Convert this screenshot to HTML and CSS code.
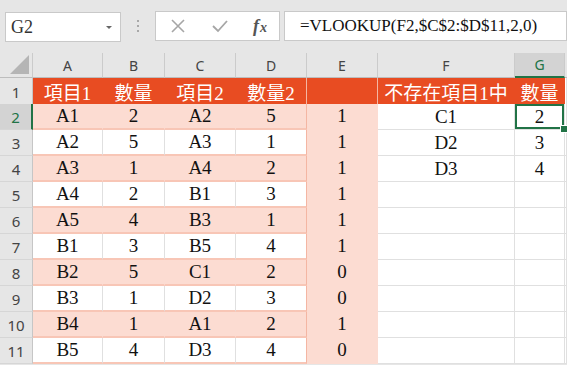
FILE: index.html
```html
<!DOCTYPE html>
<html lang="zh-Hant">
<head>
    <meta charset="UTF-8">
    <title>VLOOKUP</title>
    <link rel="stylesheet" href="styles.css">
</head>
<body>

    <!-- Name box + formula bar -->
    <div class="toolbar">
        <div class="namebox">
            <span>G2</span>
            <span class="drop"></span>
        </div>
        <div class="grip"><i></i><i></i><i></i></div>
        <div class="fbuttons">
            <svg width="16" height="16" viewBox="0 0 16 16"><path d="M2 2 L14 14 M14 2 L2 14" stroke="#a6a6a6" stroke-width="1.6" fill="none"/></svg>
            <svg width="18" height="16" viewBox="0 0 18 16"><path d="M2 8 L7 13 L16 3" stroke="#a6a6a6" stroke-width="1.8" fill="none"/></svg>
            <span class="fx">f<span>x</span></span>
        </div>
        <div class="formula">=VLOOKUP(F2,$C$2:$D$11,2,0)</div>
    </div>

    <div class="sheet">
        <div class="row colhead">
            <div class="corner"></div>
            <div>A</div><div>B</div><div>C</div><div>D</div><div>E</div><div>F</div>
            <div class="cur">G</div><div></div>
        </div>

        <div class="row hd">
            <div class="rh">1</div>
            <div>項目1</div><div>數量</div><div>項目2</div><div class="dcol">數量2</div>
            <div class="dcol"></div><div>不存在項目1中</div><div>數量</div><div class="x"></div>
        </div>
        <div class="row band">
            <div class="rh cur">2</div>
            <div>A1</div><div>2</div><div>A2</div><div class="dcol">5</div>
            <div class="e">1</div><div class="f">C1</div><div class="f sel">2</div><div class="x"></div>
        </div>
        <div class="row">
            <div class="rh">3</div>
            <div>A2</div><div>5</div><div>A3</div><div class="dcol">1</div>
            <div class="e">1</div><div class="f">D2</div><div class="f">3</div><div class="x"></div>
        </div>
        <div class="row band">
            <div class="rh">4</div>
            <div>A3</div><div>1</div><div>A4</div><div class="dcol">2</div>
            <div class="e">1</div><div class="f">D3</div><div class="f">4</div><div class="x"></div>
        </div>
        <div class="row">
            <div class="rh">5</div>
            <div>A4</div><div>2</div><div>B1</div><div class="dcol">3</div>
            <div class="e">1</div><div class="f"></div><div class="f"></div><div class="x"></div>
        </div>
        <div class="row band">
            <div class="rh">6</div>
            <div>A5</div><div>4</div><div>B3</div><div class="dcol">1</div>
            <div class="e">1</div><div class="f"></div><div class="f"></div><div class="x"></div>
        </div>
        <div class="row">
            <div class="rh">7</div>
            <div>B1</div><div>3</div><div>B5</div><div class="dcol">4</div>
            <div class="e">1</div><div class="f"></div><div class="f"></div><div class="x"></div>
        </div>
        <div class="row band">
            <div class="rh">8</div>
            <div>B2</div><div>5</div><div>C1</div><div class="dcol">2</div>
            <div class="e">0</div><div class="f"></div><div class="f"></div><div class="x"></div>
        </div>
        <div class="row">
            <div class="rh">9</div>
            <div>B3</div><div>1</div><div>D2</div><div class="dcol">3</div>
            <div class="e">0</div><div class="f"></div><div class="f"></div><div class="x"></div>
        </div>
        <div class="row band">
            <div class="rh">10</div>
            <div>B4</div><div>1</div><div>A1</div><div class="dcol">2</div>
            <div class="e">1</div><div class="f"></div><div class="f"></div><div class="x"></div>
        </div>
        <div class="row">
            <div class="rh">11</div>
            <div>B5</div><div>4</div><div>D3</div><div class="dcol">4</div>
            <div class="e">0</div><div class="f"></div><div class="f"></div><div class="x"></div>
        </div>
    </div>

</body>
</html>
```

FILE: styles.css
```css
body {
    margin: 0;
    background-color: #e6e6e6;
    font-family: 'Liberation Serif', 'Noto Sans CJK TC', serif;
    color: #111;
    overflow: hidden;
}

/* toolbar */
.toolbar {
    display: flex;
    align-items: flex-start;
    height: 53px;
    box-sizing: border-box;
    padding: 11px 0 0 5px;
}

.namebox,
.fbuttons,
.formula {
    height: 30px;
    box-sizing: border-box;
    background-color: #fff;
    border: 1px solid #c9c9c9;
    display: flex;
    align-items: center;
}

.namebox {
    width: 116px;
    padding: 0 8px 0 5px;
    justify-content: space-between;
    font-size: 18px;
    color: #333;
    margin-top: 1px;
}

.drop {
    width: 0;
    height: 0;
    border-left: 3px solid transparent;
    border-right: 3px solid transparent;
    border-top: 3px solid #666;
}

.grip {
    width: 34px;
    display: flex;
    flex-direction: column;
    align-items: center;
    gap: 3px;
    padding-top: 9px;
}

.grip i {
    width: 2px;
    height: 2px;
    background-color: #a8a8a8;
}

.fbuttons {
    width: 125px;
    padding: 0 12px 0 14px;
    justify-content: space-between;
}

.fx {
    font-family: 'Liberation Serif', serif;
    font-style: italic;
    font-weight: bold;
    font-size: 18px;
    color: #555;
}

.fx span {
    font-size: 14px;
    margin-left: 1px;
}

.formula {
    flex: 1;
    margin-left: 4px;
    padding-left: 15px;
    font-size: 17px;
    color: #111;
}

/* grid */
.row {
    display: grid;
    grid-template-columns: 33px 70px 62px 71px 71px 71px 137px 50px 1fr;
    height: 26px;
    background-color: #fff;
}

.row > div {
    box-sizing: border-box;
    border-right: 1px solid #e0e0e0;
    border-bottom: 2px solid #f8c6b6;
    display: flex;
    align-items: center;
    justify-content: center;
    font-size: 19px;
    white-space: nowrap;
}

.colhead {
    height: 25px;
    background-color: #e6e6e6;
}

.colhead > div {
    font-family: 'Noto Sans', sans-serif;
    font-size: 14px;
    color: #444;
    border-right: 1px solid #cbcbcb;
    border-bottom: 1px solid #bdbdbd;
}

.colhead > div:last-child {
    border-right: none;
}

.corner {
    position: relative;
}

.corner::after {
    content: "";
    position: absolute;
    right: 3px;
    bottom: 3px;
    width: 19px;
    height: 19px;
    background-color: #b5b5b5;
    clip-path: polygon(100% 0, 100% 100%, 0 100%);
}

.row > .rh {
    background-color: #e6e6e6;
    font-family: 'Noto Sans', sans-serif;
    font-size: 15px;
    color: #444;
    border-right: 1px solid #c6c6c6;
    border-bottom: 1px solid #d6d6d6;
}

.colhead > .cur {
    background-color: #d3d3d3;
    color: #217346;
    border-bottom: 2px solid #217346;
}

.row > .rh.cur {
    background-color: #d3d3d3;
    color: #217346;
    border-right: 2px solid #217346;
}

/* table header row */
.hd > div {
    background-color: #e84c22;
    color: #fff;
    border-right-color: #e84c22;
    border-bottom-color: #e84c22;
}

.hd > .dcol {
    border-right-color: #ee7a59;
}

.hd > .x {
    background-color: #fff;
    border-right-color: #e0e0e0;
    border-bottom: 1px solid #e0e0e0;
}

/* banded rows */
.band > div {
    background-color: #fcdcd2;
    border-right-color: #fcdcd2;
}

.row > .dcol {
    border-right-color: #f4b6a3;
}

.row > .e {
    background-color: #fcdcd2;
    border-right-color: #fcdcd2;
    border-bottom-color: #fcdcd2;
}

.row > .f,
.row > .x {
    background-color: #fff;
    border-right: 1px solid #e0e0e0;
    border-bottom: 1px solid #e0e0e0;
}

.row > .sel {
    position: relative;
    box-shadow: inset 0 0 0 2px #217346;
}

.sel::after {
    content: "";
    position: absolute;
    right: -4px;
    bottom: -4px;
    width: 6px;
    height: 6px;
    background-color: #217346;
    border: 1px solid #fff;
    z-index: 2;
}
```
